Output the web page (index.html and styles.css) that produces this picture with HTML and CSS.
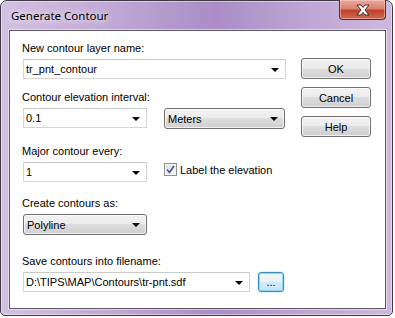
FILE: index.html
```html
<!DOCTYPE html>
<html lang="en">
<head>
    <meta charset="UTF-8">
    <title>Generate Contour</title>
    <link rel="stylesheet" href="styles.css">
</head>
<body>
    <div class="window">
        <div class="titlebar">
            <span class="title">Generate Contour</span>
            <div class="close-button">
                <svg width="18" height="12" viewBox="0 0 18 12">
                    <path d="M3 1 L7 1 L9 3.5 L11 1 L15 1 L11 6 L15 11 L11 11 L9 8.5 L7 11 L3 11 L7 6 Z" fill="#fff" stroke="#4a2b2b" stroke-width="1" stroke-linejoin="round"/>
                </svg>
            </div>
        </div>

        <div class="client">
            <div class="form">
                <div class="group group-name">
                    <div class="label">New contour layer name:</div>
                    <div class="combo combo-wide">
                        <span>tr_pnt_contour</span>
                        <span class="arrow"></span>
                    </div>
                </div>

                <div class="group group-interval">
                    <div class="label">Contour elevation interval:</div>
                    <div class="row">
                        <div class="combo combo-small">
                            <span>0.1</span>
                            <span class="arrow"></span>
                        </div>
                        <div class="dropdown dropdown-units">
                            <span>Meters</span>
                            <span class="arrow"></span>
                        </div>
                    </div>
                </div>

                <div class="group group-major">
                    <div class="label">Major contour every:</div>
                    <div class="row">
                        <div class="combo combo-small">
                            <span>1</span>
                            <span class="arrow"></span>
                        </div>
                        <label class="checkbox">
                            <span class="check-box">
                                <svg width="9" height="9" viewBox="0 0 9 9">
                                    <path d="M1 4.5 L3.5 7.5 L8 1" fill="none" stroke="#3b55a0" stroke-width="1.6"/>
                                </svg>
                            </span>
                            <span>Label the elevation</span>
                        </label>
                    </div>
                </div>

                <div class="group group-type">
                    <div class="label">Create contours as:</div>
                    <div class="dropdown dropdown-type">
                        <span>Polyline</span>
                        <span class="arrow"></span>
                    </div>
                </div>

                <div class="group group-file">
                    <div class="label">Save contours into filename:</div>
                    <div class="row">
                        <div class="combo combo-file">
                            <span>D:\TIPS\MAP\Contours\tr-pnt.sdf</span>
                            <span class="arrow"></span>
                        </div>
                        <div class="browse-button">...</div>
                    </div>
                </div>
            </div>

            <div class="buttons">
                <div class="button">OK</div>
                <div class="button">Cancel</div>
                <div class="button">Help</div>
            </div>
        </div>
    </div>
</body>
</html>
```

FILE: styles.css
```css
* {
    margin: 0;
    padding: 0;
    box-sizing: border-box;
}

body {
    background: #ffffff;
    font-family: 'Liberation Sans', Arial, sans-serif;
    font-size: 11px;
    color: #000;
}

/* window frame */
.window {
    width: 393px;
    height: 316px;
    border: 1px solid #3f3a44;
    border-radius: 7px 7px 5px 5px;
    background: linear-gradient(90deg, #d2c1e0 0%, #c3abd7 25%, #ab8cc6 55%, #c0a7d5 80%, #cdb9dd 100%);
    box-shadow: inset 0 0 0 1px rgba(255, 255, 255, 0.45);
    display: flex;
    flex-direction: column;
    padding: 0 6px 6px 8px;
}

.titlebar {
    height: 29px;
    display: flex;
    justify-content: space-between;
    align-items: flex-start;
}

.title {
    font-family: 'Noto Sans', 'Open Sans', sans-serif;
    font-size: 11.5px;
    margin: 7px 0 0 2px;
    text-shadow: 0 0 6px rgba(255, 255, 255, 0.9), 0 0 10px rgba(255, 255, 255, 0.7);
}

.close-button {
    width: 47px;
    height: 20px;
    margin-top: -1px;
    border: 1px solid #5a2b2b;
    border-top: none;
    border-radius: 0 0 4px 4px;
    background: linear-gradient(#e6aca0 0%, #d9806d 45%, #c0402a 55%, #cf6a52 100%);
    box-shadow: inset 0 0 0 1px rgba(255, 210, 200, 0.5);
    display: flex;
    align-items: center;
    justify-content: center;
}

/* client area */
.client {
    flex: 1;
    background: #fff;
    border: 1px solid #5d5763;
    box-shadow: 0 0 0 1px rgba(255, 255, 255, 0.5);
    display: flex;
    align-items: flex-start;
    padding: 11px 0 0 13px;
}

.form {
    width: 263px;
    display: flex;
    flex-direction: column;
}

.label {
    height: 13px;
    line-height: 13px;
    margin-left: -1px;
    margin-bottom: 4px;
    white-space: nowrap;
}

.group-interval { margin-top: 12px; }
.group-major { margin-top: 16px; }
.group-type { margin-top: 15px; }
.group-file { margin-top: 20px; }

.row {
    display: flex;
    align-items: flex-start;
}

.combo {
    height: 20px;
    border: 1px solid #d5d5d5;
    border-top-color: #c9c9c9;
    background: #fff;
    display: flex;
    align-items: center;
    justify-content: space-between;
    padding: 0 6px 0 2px;
    white-space: nowrap;
}

.combo-wide { width: 263px; }
.combo-small { width: 124px; }
.combo-file { width: 227px; }

.arrow {
    width: 0;
    height: 0;
    border-left: 4px solid transparent;
    border-right: 4px solid transparent;
    border-top: 4px solid #000;
    margin-top: 1px;
}

.dropdown {
    height: 21px;
    border: 1px solid #707070;
    border-radius: 3px;
    background: linear-gradient(#f2f2f2 0%, #ebebeb 50%, #dddddd 50%, #cfcfcf 100%);
    box-shadow: inset 0 0 0 1px rgba(255, 255, 255, 0.7);
    display: flex;
    align-items: center;
    justify-content: space-between;
    padding: 0 6px 0 3px;
}

.dropdown-units {
    width: 121px;
    margin-left: 17px;
}

.dropdown-type { width: 124px; }

.checkbox {
    display: flex;
    align-items: center;
    gap: 3px;
    margin: 1px 0 0 17px;
}

.check-box {
    width: 13px;
    height: 13px;
    border: 1px solid #8e8f8f;
    background: linear-gradient(135deg, #dcdcdc, #fbfbfb);
    box-shadow: inset 0 0 0 1px #f4f4f4;
    display: flex;
    align-items: center;
    justify-content: center;
}

.browse-button {
    width: 26px;
    height: 20px;
    margin-left: 8px;
    border: 1px solid #3c8dc4;
    border-radius: 3px;
    background: linear-gradient(#f2f9fd 0%, #e6f3fb 50%, #d5ebf8 50%, #c6e4f6 100%);
    box-shadow: inset 0 0 0 1px #8fd6f5, 0 0 2px #8fd6f5;
    display: flex;
    align-items: center;
    justify-content: center;
    line-height: 1;
    padding-top: 1px;
}

/* command buttons */
.buttons {
    display: flex;
    flex-direction: column;
    gap: 8px;
    padding-top: 16px;
    margin-left: 15px;
}

.button {
    width: 70px;
    height: 21px;
    border: 1px solid #707070;
    border-radius: 3px;
    background: linear-gradient(#f2f2f2 0%, #ebebeb 50%, #dddddd 50%, #cfcfcf 100%);
    box-shadow: inset 0 0 0 1px rgba(255, 255, 255, 0.7);
    display: flex;
    align-items: center;
    justify-content: center;
}
```
